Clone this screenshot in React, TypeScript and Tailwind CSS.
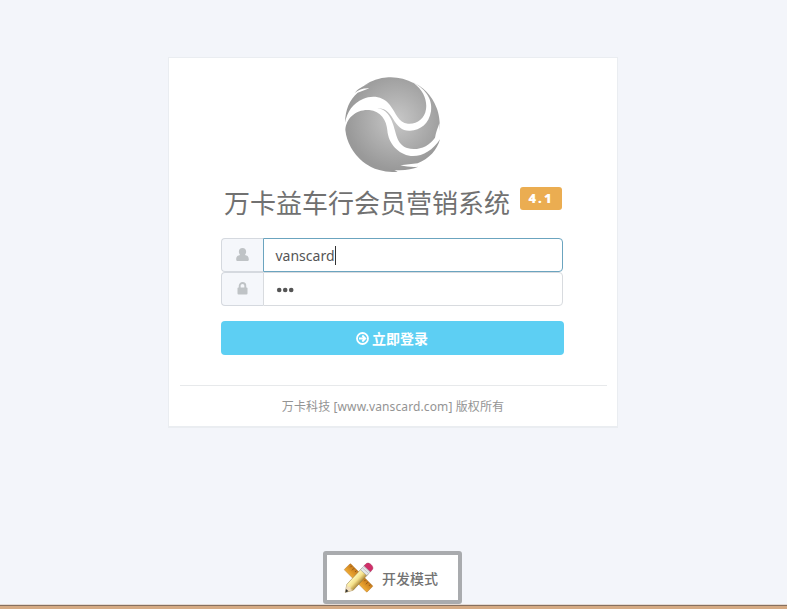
function Logo() {
  return (
    <svg className="mr-[2px] block h-[110px] w-[115px]" viewBox="0 0 345 330">
      <defs>
        <radialGradient id="metal" gradientUnits="userSpaceOnUse" cx="185" cy="150" r="150">
          <stop offset="0" stopColor="#c8c8c8" />
          <stop offset="0.5" stopColor="#b0b0b0" />
          <stop offset="1" stopColor="#999" />
        </radialGradient>
      </defs>
      <g fill="url(#metal)">
        <path d="M30 158C31 118 44 88 68 68L103 55C84 54 71 59 59 69C68 57 80 50 106 38L86 47A142 142 0 0 1 237 40C265 61 277 90 273 118C269 147 246 163 219 161C189 158 184 129 164 104C143 78 111 75 84 87C54 99 36 126 30 158Z" />
        <path d="M227 34A142 142 0 0 1 305 114C312 132 315 153 315 184L313 160C309 173 303 185 300 203C281 231 247 243 216 234C184 223 184 188 173 160C166 139 152 116 127 115C149 114 161 125 174 146C188 169 201 183 225 182C257 181 282 161 288 124C294 85 268 53 227 34Z" />
        <path d="M31 180C33 143 65 117 103 120C137 123 155 151 157 181C160 221 190 253 227 258C261 261 293 242 315 208C306 240 284 265 248 280L196 286C216 290 233 292 250 290C231 298 210 302 178 300L188 305A142 142 0 0 1 31 180Z" />
      </g>
    </svg>
  );
}

function Tools() {
  return (
    <svg className="h-[32px] w-[32px] shrink-0" viewBox="0 0 96 96">
      <defs>
        <linearGradient id="wood" x1="0" y1="0" x2="1" y2="0">
          <stop stopColor="#f0ac35" /><stop offset="1" stopColor="#c77919" />
        </linearGradient>
        <linearGradient id="pencil" x1="0" y1="0" x2="1" y2="0">
          <stop stopColor="#fff8b8" /><stop offset="0.5" stopColor="#f4e08a" /><stop offset="1" stopColor="#b08c3c" />
        </linearGradient>
      </defs>
      <g transform="translate(46 47) rotate(-45)">
        <rect x="-13" y="-47" width="26" height="96" rx="2" fill="url(#wood)" stroke="#b0711f" strokeWidth="1.5" />
        <path d="M11-39H5M11-29H2M11-19H5M11 20H5M11 30H2M11 40H5" stroke="#754817" strokeWidth="2" />
      </g>
      <g transform="translate(47 48) rotate(43)">
        <path d="M-13-27H13V38L0 59L-13 38Z" fill="url(#pencil)" stroke="#917741" strokeWidth="1.5" />
        <path d="M-13 37L0 59L13 37L5 41L0 36L-6 41Z" fill="#f0ddba" />
        <path d="M-5 50L0 59L5 50Z" fill="#343434" />
        <path d="M-13-41H13V-22H-13Z" fill="#e6e8e9" stroke="#909799" strokeWidth="1.5" />
        <path d="M-13-36H13M-13-30H13" stroke="#b4b8ba" strokeWidth="2" />
        <path d="M-13-38V-46C-13-58 13-58 13-46V-38Z" fill="#cf2f69" stroke="#98264c" strokeWidth="1" />
      </g>
    </svg>
  );
}

export default function App() {
  return (
    <div className="flex h-[609px] w-[787px] flex-col overflow-hidden bg-[#f3f5fa] pt-[57px] font-['Open_Sans','Noto_Sans_CJK_SC',sans-serif]">
      <main className="ml-[168px] flex h-[371px] w-[450px] shrink-0 flex-col items-center border border-b-2 border-[#eaedf1] bg-white pt-[12px]">
        <Logo />
        <div className="mt-[3px] flex h-[38px] w-[338px] items-start justify-between">
          <h1 className="whitespace-nowrap font-['Noto_Sans_CJK_SC',sans-serif] text-[26px] leading-[38px] text-[#717171]">万卡益车行会员营销系统</h1>
          <span className="mt-[4px] flex h-[23px] w-[42px] shrink-0 items-center justify-center rounded-[3px] bg-[#ebad51] text-[13px] font-extrabold tracking-[2px] text-white">4.1</span>
        </div>
        <form className="mr-[2px] mt-[17px] w-[343px]">
          <div className="flex h-[34px] w-[342px]">
            <div className="flex w-[42px] items-center justify-center rounded-l-[4px] border border-r-0 border-[#d5d9df] bg-[#f5f7fb]">
              <svg className="h-[14px] w-[13px]" viewBox="0 0 13 14" fill="#bfc3c6"><path d="M6.5 0C3.9 0 2.6 2 2.9 4.3C3.1 5.9 3.9 6.6 4 7C2 7.5.3 8.1.2 11.2C.1 12.5.8 13 1.8 13H11.2C12.2 13 12.9 12.5 12.8 11.2C12.7 8.1 11 7.5 9 7C9.1 6.6 9.9 5.9 10.1 4.3C10.4 2 9.1 0 6.5 0Z" /></svg>
            </div>
            <div className="flex flex-1 items-center rounded-r-[4px] border border-[#6ba4bf] bg-white pl-[12px] font-['Noto_Sans',sans-serif] text-[14px] text-[#555]">
              <span>vanscard</span><span className="h-[19px] w-px bg-[#333]" />
            </div>
          </div>
          <div className="flex h-[34px] w-[342px]">
            <div className="flex w-[42px] items-center justify-center rounded-l-[4px] border border-r-0 border-[#d5d9df] bg-[#f5f7fb]">
              <svg className="mb-[2px] h-[13px] w-[11px]" viewBox="0 0 11 13"><rect x=".5" y="5.5" width="10" height="7" rx="1" fill="#bfc3c6" /><path d="M2.7 6V3.8A2.8 2.8 0 0 1 8.3 3.8V6" fill="none" stroke="#bfc3c6" strokeWidth="1.9" /></svg>
            </div>
            <div className="flex flex-1 items-center rounded-r-[4px] border border-[#d8dbdf] pl-[12px] pt-[2px]">
              <svg className="h-[6px] w-[18px]" viewBox="0 0 18 6" fill="#555"><circle cx="3.2" cy="3" r="2.3" /><circle cx="9.2" cy="3" r="2.3" /><circle cx="15.2" cy="3" r="2.3" /></svg>
            </div>
          </div>
          <button type="button" className="mt-[15px] flex h-[34px] w-full items-center justify-center gap-[3px] rounded-[4px] bg-[#5dcff3] text-[14px] font-bold text-white">
            <svg className="size-[13px]" viewBox="0 0 13 13" fill="none" stroke="white" strokeWidth="1.8"><circle cx="6.5" cy="6.5" r="5.5" /><path d="M3 6.5H9M6.3 3.5L9.3 6.5L6.3 9.5" /></svg>
            <span>立即登录</span>
          </button>
        </form>
        <footer className="mt-[30px] w-[427px] border-t border-[#e7e9eb] pt-[12px] text-center font-['Noto_Sans','Noto_Sans_CJK_SC',sans-serif] text-[12px] leading-[18px] tracking-[0.11px] text-[#949494]">万卡科技 [www.vanscard.com] 版权所有</footer>
      </main>
      <div className="ml-[323px] mt-[123px] flex h-[53px] w-[139px] shrink-0 items-center rounded-[3px] border-4 border-[#a9abae] bg-white pl-[16px] text-[14px] text-[#737373]">
        <Tools /><span className="ml-[7px] pt-px font-['Noto_Sans_CJK_SC',sans-serif] font-medium">开发模式</span>
      </div>
      <div className="h-[5px] w-full shrink-0 border-t border-[#e5dad3] bg-[#d5aa83]"><div className="h-px bg-[#86705f]" /></div>
    </div>
  );
}
